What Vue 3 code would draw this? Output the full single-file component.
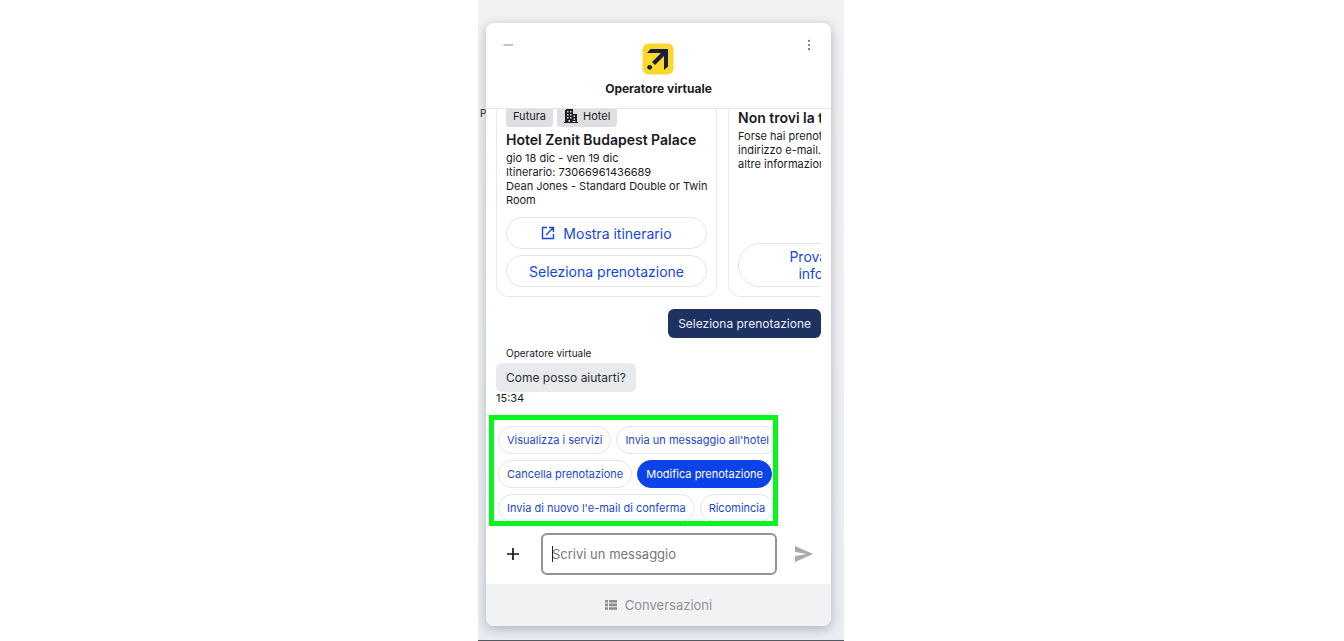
<script setup>
import { ref } from 'vue'

const message = ref('')
const replies = [
  [{ text: 'Visualizza i servizi' }, { text: "Invia un messaggio all'hotel" }],
  [{ text: 'Cancella prenotazione' }, { text: 'Modifica prenotazione', active: true }],
  [{ text: "Invia di nuovo l'e-mail di conferma" }, { text: 'Ricomincia' }],
]
</script>

<template>
  <div class="page">
    <div class="backdrop">
      <span class="behind">P</span>
      <main class="panel">
        <header class="header">
          <button class="icon-btn" aria-label="Riduci">
            <svg width="10" height="10" viewBox="0 0 10 10"><path d="M0.500 5h9.500" stroke="#8b8d95" stroke-width="1.200" /></svg>
          </button>
          <div class="brand">
            <svg class="logo" width="32" height="32" viewBox="0 0 32 32" aria-hidden="true">
              <rect x="0.500" y="0.500" width="31" height="31" rx="6" fill="#fcd82f" />
              <path d="M8.500 6H26V23.500L22 27V13L13 22L10 19L19 10H5Z" fill="#191e3b" />
              <circle cx="7.700" cy="24.300" r="2.400" fill="#191e3b" />
            </svg>
            <h1>Operatore virtuale</h1>
          </div>
          <button class="icon-btn" aria-label="Altre opzioni">
            <svg width="10" height="12" viewBox="0 0 10 12" fill="#6d7078"><circle cx="5" cy="1.800" r="1.100" /><circle cx="5" cy="6" r="1.100" /><circle cx="5" cy="10.200" r="1.100" /></svg>
          </button>
        </header>

        <section class="thread">
          <div class="carousel">
            <article class="card">
              <div class="badges">
                <span class="badge">Futura</span>
                <span class="badge">
                  <svg width="14" height="14" viewBox="0 0 14 14" aria-hidden="true">
                    <path fill="#1d1e22" fill-rule="evenodd" d="M2 0h7v5h4v8h1v1H0v-1h1V1h1zM3 2v1.500h1.500V2zM6 2v1.500h1.500V2zM3 5v1.500h1.500V5zM6 5v1.500h1.500V5zM3 8v1.500h1.500V8zM6 8v1.500h1.500V8zM4.500 11v2H6v-2zM9.500 6.500V8H11V6.500zM9.500 9.500V11H11V9.500zM8.500 12v1h3v-1z" />
                  </svg>
                  Hotel
                </span>
              </div>
              <h2>Hotel Zenit Budapest Palace</h2>
              <p>gio 18 dic - ven 19 dic<br />Itinerario: 73066961436689<br />Dean Jones - Standard Double or Twin Room</p>
              <div class="actions">
                <button class="pill">
                  <svg width="14" height="14" viewBox="0 0 14 14" fill="none" stroke="#1648dd" stroke-width="1.400" aria-hidden="true"><path d="M6 1.500H1.500v11h11V8M8 1.500h4.500V6M12.500 1.500L5 9" /></svg>
                  Mostra itinerario
                </button>
                <button class="pill">Seleziona prenotazione</button>
              </div>
            </article>
            <article class="card next">
              <h2>Non trovi la tua prenotazione?</h2>
              <p>Forse hai prenotato con un altro<br />indirizzo e-mail. Verifica o cerca<br />altre informazioni.</p>
              <div class="actions">
                <button class="pill tall">Prova con altre informazioni</button>
              </div>
            </article>
          </div>
          <div class="bubble mine">Seleziona prenotazione</div>
          <div class="sender">Operatore virtuale</div>
          <div class="bubble">Come posso aiutarti?</div>
          <time>15:34</time>
        </section>

        <section class="replies" aria-label="Risposte rapide">
          <div v-for="(row, i) in replies" :key="i" class="reply-row">
            <button v-for="r in row" :key="r.text" class="chip" :class="{ active: r.active }">{{ r.text }}</button>
          </div>
        </section>

        <form class="composer" @submit.prevent>
          <button type="button" class="icon-btn" aria-label="Aggiungi">
            <svg width="14" height="14" viewBox="0 0 14 14"><path d="M7 1v12M1 7h12" stroke="#17181c" stroke-width="1.700" /></svg>
          </button>
          <div class="field">
            <input v-model="message" type="text" placeholder="Scrivi un messaggio" aria-label="Scrivi un messaggio" />
            <span class="caret"></span>
          </div>
          <button class="icon-btn" aria-label="Invia">
            <svg width="18" height="16" viewBox="0 0 18 16"><path d="M0 0L18 8L0 16V10L12 8L0 6Z" fill="#a9aaac" /></svg>
          </button>
        </form>

        <button class="footer">
          <svg width="12" height="10" viewBox="0 0 12 10" fill="#8d8e91" aria-hidden="true"><path d="M0 0h3v2.600H0zM4 0h8v2.600H4zM0 3.600h3v2.600H0zM4 3.600h8v2.600H4zM0 7.200h3v2.600H0zM4 7.200h8v2.600H4z" /></svg>
          Conversazioni
        </button>
      </main>
    </div>
  </div>
</template>

<style>
body {
  margin: 0;
  background: #fff;
}
</style>

<style scoped>
* {
  box-sizing: border-box;
}
.page {
  display: flex;
  justify-content: center;
  height: 100vh;
  padding-right: 22px;
  font-family: Inter, "Liberation Sans", sans-serif;
  color: #191a1f;
}
button,
input {
  font: inherit;
}
button {
  cursor: pointer;
}
h1,
h2,
p {
  margin: 0;
}
.backdrop {
  position: relative;
  display: flex;
  width: 100%;
  max-width: 366px;
  padding: 23px 13px 14px 8px;
  overflow: hidden;
  background: linear-gradient(#f2f2f4, #eff0f3 60%, #e9eef3);
  border-bottom: 1px solid #555960;
}
.behind {
  position: absolute;
  left: 2px;
  top: 106px;
  font-size: 10px;
  line-height: 14px;
}
.panel {
  position: relative;
  display: flex;
  flex: 1;
  flex-direction: column;
  min-width: 0;
  min-height: 0;
  overflow: hidden;
  background: #fff;
  border-radius: 8px;
  box-shadow: 0 3px 12px rgba(60, 70, 85, 0.35);
}
.header {
  display: flex;
  flex-shrink: 0;
  justify-content: space-between;
  align-items: flex-start;
  padding: 16px 17px 10px;
  border-bottom: 1px solid #e3e4e8;
}
.icon-btn {
  display: flex;
  align-items: center;
  justify-content: center;
  padding: 0;
  border: 0;
  background: none;
}
.header .icon-btn {
  height: 12px;
}
.brand {
  display: flex;
  flex-direction: column;
  align-items: center;
  gap: 4px;
  padding-top: 4px;
}
h1 {
  font-size: 12px;
  font-weight: 700;
  line-height: 19px;
}
.thread {
  display: flex;
  flex: 1;
  flex-direction: column;
  justify-content: flex-end;
  align-items: flex-start;
  min-height: 0;
  padding: 0 10px 10px;
  overflow: hidden;
}
.carousel {
  display: flex;
  flex-shrink: 0;
  align-self: stretch;
  gap: 11px;
  margin-bottom: 12px;
  overflow: hidden;
}
.card {
  display: flex;
  flex: 0 0 221px;
  flex-direction: column;
  padding: 9px;
  border: 1px solid #e8e9ee;
  border-radius: 12px;
}
.next {
  padding-top: 12px;
}
.badges {
  display: flex;
  gap: 4px;
  margin-bottom: 3px;
}
.badge {
  display: flex;
  align-items: center;
  gap: 5px;
  height: 22px;
  padding: 0 7px;
  border-radius: 4px;
  background: #dfdfe1;
  font-size: 11px;
}
h2 {
  font-size: 14px;
  font-weight: 600;
  line-height: 20px;
  white-space: nowrap;
}
.card p {
  margin: 1px -6px 0 0;
  font-size: 11px;
  line-height: 14px;
}
.next p {
  white-space: nowrap;
}
.actions {
  display: flex;
  flex-direction: column;
  gap: 6px;
  margin-top: auto;
  padding-top: 10px;
}
.pill {
  display: flex;
  align-items: center;
  justify-content: center;
  gap: 8px;
  min-height: 32px;
  padding: 0 10px;
  border: 1px solid #e4e5eb;
  border-radius: 22px;
  background: #fff;
  color: #1648dd;
  font-size: 14px;
  line-height: 17px;
}
.tall {
  min-height: 44px;
  padding: 0 36px;
}
.bubble {
  padding: 0 10px;
  border-radius: 6px;
  background: #e9eaed;
  color: #2c2e38;
  font-size: 12px;
  line-height: 29px;
}
.mine {
  align-self: flex-end;
  background: #1e3262;
  color: #e9edf8;
}
.sender {
  margin: 8px 0 3px 10px;
  font-size: 10px;
  line-height: 14px;
}
time {
  font-size: 11px;
  line-height: 13px;
}
.replies {
  display: flex;
  flex-shrink: 0;
  flex-direction: column;
  gap: 6px;
  width: 289px;
  height: 111px;
  margin-left: 3px;
  padding: 6px 0 0 4px;
  overflow: hidden;
  border: 5px solid #08f51d;
}
.reply-row {
  display: flex;
  flex-shrink: 0;
  gap: 5px;
}
.chip {
  flex-shrink: 0;
  height: 28px;
  padding: 0 8px;
  border: 1px solid #e4e5eb;
  border-radius: 14px;
  background: #fff;
  color: #1c47cc;
  font-size: 11px;
  white-space: nowrap;
}
.active {
  border-color: #0b43e8;
  background: #0b43e8;
  color: #fff;
}
.composer {
  display: flex;
  flex-shrink: 0;
  align-items: center;
  gap: 18px;
  height: 58px;
  padding: 0 18px 2px 20px;
}
.composer > .icon-btn {
  flex-shrink: 0;
}
.field {
  position: relative;
  flex: 1;
  margin-left: 3px;
}
.field input {
  display: block;
  width: 100%;
  height: 42px;
  padding: 0 9px;
  border: 2px solid #949496;
  border-radius: 6px;
  background: #fff;
  outline: 0;
  font-size: 13px;
}
.field input::placeholder {
  color: #76777b;
  opacity: 1;
}
.caret {
  position: absolute;
  left: 11px;
  top: 13px;
  width: 1px;
  height: 16px;
  background: #222;
}
.footer {
  display: flex;
  flex-shrink: 0;
  align-items: center;
  justify-content: center;
  gap: 8px;
  height: 42px;
  padding: 0;
  border: 0;
  background: #f1f2f3;
  color: #909194;
  font-size: 13px;
}
</style>
